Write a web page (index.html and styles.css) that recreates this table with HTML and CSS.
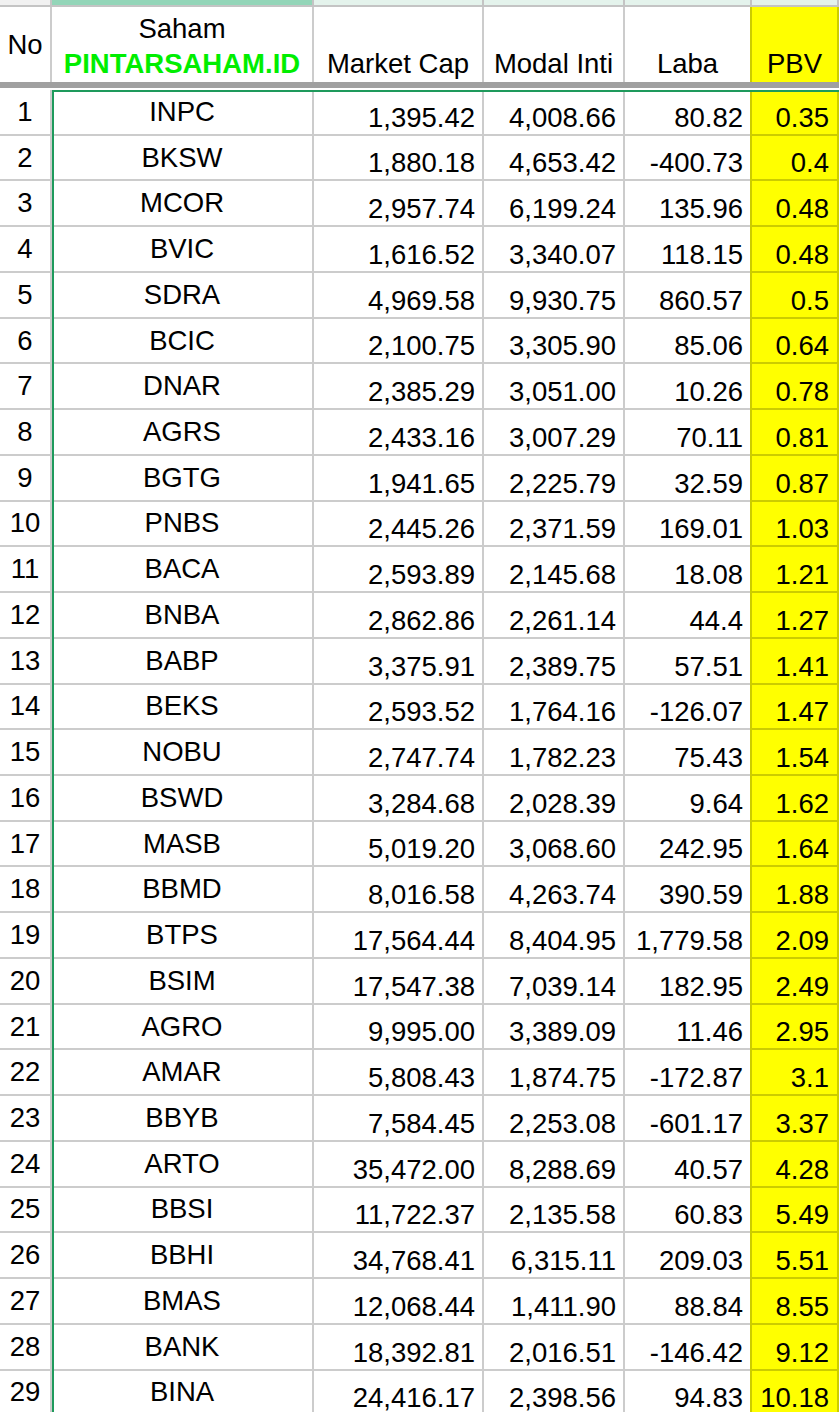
FILE: index.html
```html
<!DOCTYPE html>
<html>
<head>
<meta charset="utf-8">
<title>PBV Saham Bank</title>
<link rel="stylesheet" href="styles.css">
</head>
<body>
<div class="sheet">
  <div class="strip">
    <div class="sc sc-a"></div><div class="sc sc-b"></div><div class="sc"></div><div class="sc"></div><div class="sc"></div><div class="sc sc-f"></div>
  </div>
  <div class="head">
    <div class="h h-no">No</div>
    <div class="h h-saham"><span>Saham</span><span class="brand">PINTARSAHAM.ID</span></div>
    <div class="h">Market Cap</div>
    <div class="h">Modal Inti</div>
    <div class="h">Laba</div>
    <div class="h pbv">PBV</div>
  </div>
  <div class="freeze"></div>
  <div class="gap"></div>
  <div class="data">
    <div class="c no">1</div><div class="c tk">INPC</div><div class="c">1,395.42</div><div class="c">4,008.66</div><div class="c">80.82</div><div class="c pb">0.35</div>
    <div class="c no">2</div><div class="c tk">BKSW</div><div class="c">1,880.18</div><div class="c">4,653.42</div><div class="c">-400.73</div><div class="c pb">0.4</div>
    <div class="c no">3</div><div class="c tk">MCOR</div><div class="c">2,957.74</div><div class="c">6,199.24</div><div class="c">135.96</div><div class="c pb">0.48</div>
    <div class="c no">4</div><div class="c tk">BVIC</div><div class="c">1,616.52</div><div class="c">3,340.07</div><div class="c">118.15</div><div class="c pb">0.48</div>
    <div class="c no">5</div><div class="c tk">SDRA</div><div class="c">4,969.58</div><div class="c">9,930.75</div><div class="c">860.57</div><div class="c pb">0.5</div>
    <div class="c no">6</div><div class="c tk">BCIC</div><div class="c">2,100.75</div><div class="c">3,305.90</div><div class="c">85.06</div><div class="c pb">0.64</div>
    <div class="c no">7</div><div class="c tk">DNAR</div><div class="c">2,385.29</div><div class="c">3,051.00</div><div class="c">10.26</div><div class="c pb">0.78</div>
    <div class="c no">8</div><div class="c tk">AGRS</div><div class="c">2,433.16</div><div class="c">3,007.29</div><div class="c">70.11</div><div class="c pb">0.81</div>
    <div class="c no">9</div><div class="c tk">BGTG</div><div class="c">1,941.65</div><div class="c">2,225.79</div><div class="c">32.59</div><div class="c pb">0.87</div>
    <div class="c no">10</div><div class="c tk">PNBS</div><div class="c">2,445.26</div><div class="c">2,371.59</div><div class="c">169.01</div><div class="c pb">1.03</div>
    <div class="c no">11</div><div class="c tk">BACA</div><div class="c">2,593.89</div><div class="c">2,145.68</div><div class="c">18.08</div><div class="c pb">1.21</div>
    <div class="c no">12</div><div class="c tk">BNBA</div><div class="c">2,862.86</div><div class="c">2,261.14</div><div class="c">44.4</div><div class="c pb">1.27</div>
    <div class="c no">13</div><div class="c tk">BABP</div><div class="c">3,375.91</div><div class="c">2,389.75</div><div class="c">57.51</div><div class="c pb">1.41</div>
    <div class="c no">14</div><div class="c tk">BEKS</div><div class="c">2,593.52</div><div class="c">1,764.16</div><div class="c">-126.07</div><div class="c pb">1.47</div>
    <div class="c no">15</div><div class="c tk">NOBU</div><div class="c">2,747.74</div><div class="c">1,782.23</div><div class="c">75.43</div><div class="c pb">1.54</div>
    <div class="c no">16</div><div class="c tk">BSWD</div><div class="c">3,284.68</div><div class="c">2,028.39</div><div class="c">9.64</div><div class="c pb">1.62</div>
    <div class="c no">17</div><div class="c tk">MASB</div><div class="c">5,019.20</div><div class="c">3,068.60</div><div class="c">242.95</div><div class="c pb">1.64</div>
    <div class="c no">18</div><div class="c tk">BBMD</div><div class="c">8,016.58</div><div class="c">4,263.74</div><div class="c">390.59</div><div class="c pb">1.88</div>
    <div class="c no">19</div><div class="c tk">BTPS</div><div class="c">17,564.44</div><div class="c">8,404.95</div><div class="c">1,779.58</div><div class="c pb">2.09</div>
    <div class="c no">20</div><div class="c tk">BSIM</div><div class="c">17,547.38</div><div class="c">7,039.14</div><div class="c">182.95</div><div class="c pb">2.49</div>
    <div class="c no">21</div><div class="c tk">AGRO</div><div class="c">9,995.00</div><div class="c">3,389.09</div><div class="c">11.46</div><div class="c pb">2.95</div>
    <div class="c no">22</div><div class="c tk">AMAR</div><div class="c">5,808.43</div><div class="c">1,874.75</div><div class="c">-172.87</div><div class="c pb">3.1</div>
    <div class="c no">23</div><div class="c tk">BBYB</div><div class="c">7,584.45</div><div class="c">2,253.08</div><div class="c">-601.17</div><div class="c pb">3.37</div>
    <div class="c no">24</div><div class="c tk">ARTO</div><div class="c">35,472.00</div><div class="c">8,288.69</div><div class="c">40.57</div><div class="c pb">4.28</div>
    <div class="c no">25</div><div class="c tk">BBSI</div><div class="c">11,722.37</div><div class="c">2,135.58</div><div class="c">60.83</div><div class="c pb">5.49</div>
    <div class="c no">26</div><div class="c tk">BBHI</div><div class="c">34,768.41</div><div class="c">6,315.11</div><div class="c">209.03</div><div class="c pb">5.51</div>
    <div class="c no">27</div><div class="c tk">BMAS</div><div class="c">12,068.44</div><div class="c">1,411.90</div><div class="c">88.84</div><div class="c pb">8.55</div>
    <div class="c no">28</div><div class="c tk">BANK</div><div class="c">18,392.81</div><div class="c">2,016.51</div><div class="c">-146.42</div><div class="c pb">9.12</div>
    <div class="c no">29</div><div class="c tk">BINA</div><div class="c">24,416.17</div><div class="c">2,398.56</div><div class="c">94.83</div><div class="c pb">10.18</div>
  </div>
  <div class="selection"></div>
</div>
</body>
</html>
```

FILE: styles.css
```css
* {
  box-sizing: border-box;
}

html,
body {
  margin: 0;
  padding: 0;
  background: #ffffff;
  overflow: hidden;
}

body {
  width: 839px;
  height: 1412px;
  font-family: "Liberation Sans", Arial, sans-serif;
  font-size: 27.5px;
  color: #000000;
}

.sheet {
  position: relative;
  width: 839px;
  height: 1412px;
  overflow: hidden;
}

.strip,
.head,
.data {
  display: grid;
  grid-template-columns: 50px 262px 170px 141px 127px 89px;
}

/* column-letter strip (mostly scrolled away) */
.sc {
  height: 7px;
  background: #e4f3ec;
  border-left: 2px solid #c4c4c4;
  border-bottom: 2px solid #c4c4c4;
}

.sc-a {
  border-left: 0;
  background: #f1f1f1;
}

.sc-b {
  background: #93d5b8;
}

.sc-f {
  border-right: 2px solid #c4c4c4;
}

/* header row */
.head {
  height: 75px;
}

.h {
  display: flex;
  align-items: flex-end;
  justify-content: center;
  padding-bottom: 1px;
  line-height: 35px;
  border-left: 2px solid rgba(0, 0, 0, 0.2);
  white-space: nowrap;
}

.h-no {
  border-left: 0;
  align-items: center;
  padding: 0 0 0 0;
}

.h-saham {
  flex-direction: column;
  align-items: center;
  justify-content: flex-end;
}

.brand {
  font-weight: bold;
  color: #00ee00;
}

.pbv {
  background: #ffff00;
  border-right: 2px solid rgba(0, 0, 0, 0.2);
}

.freeze {
  height: 6px;
  background: #a0a0a0;
}

.gap {
  height: 2px;
}

/* data rows */
.data {
  grid-auto-rows: 45.74px;
}

.c {
  display: flex;
  align-items: flex-end;
  justify-content: flex-end;
  padding: 0 7px 0 0;
  border-left: 2px solid rgba(0, 0, 0, 0.2);
  border-bottom: 2px solid rgba(0, 0, 0, 0.2);
  white-space: nowrap;
}

.c.no {
  border-left: 0;
  align-items: center;
  justify-content: center;
  padding: 0;
}

.c.tk {
  align-items: center;
  justify-content: center;
  padding: 0;
}

.c.pb {
  background: #ffff00;
  border-right: 2px solid rgba(0, 0, 0, 0.2);
  padding-right: 8px;
}

/* selected range outline */
.selection {
  position: absolute;
  left: 52px;
  top: 90px;
  width: 820px;
  height: 1400px;
  border-top: 2px solid #1e9a5c;
  border-left: 2px solid #1e9a5c;
  pointer-events: none;
}
```
